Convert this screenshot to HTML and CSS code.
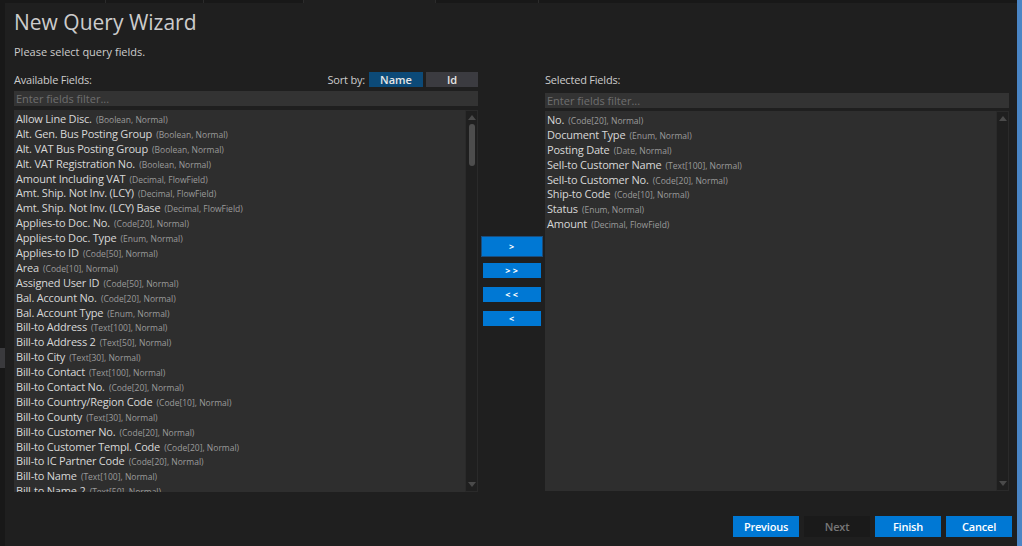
FILE: index.html
```html
<!DOCTYPE html>
<html lang="en">
<head>
    <meta charset="UTF-8">
    <title>New Query Wizard</title>
    <link rel="stylesheet" href="styles.css">
</head>
<body>
    <div class="frame">
        <div class="side-strip"><div class="side-mark"></div></div>

        <div class="wizard">
            <div class="tab-strip">
                <div class="tab" style="width:100px"></div>
                <div class="tab" style="width:97px"></div>
                <div class="tab" style="width:99px"></div>
                <div class="tab active" style="width:131px"></div>
                <div class="tab" style="width:102px"></div>
                <div class="tab tab-rest"></div>
            </div>

            <h1>New Query Wizard</h1>
            <p class="subtitle">Please select query fields.</p>

            <div class="panes">
                <div class="pane">
                    <div class="pane-header">
                        <span>Available Fields:</span>
                        <div class="sort">
                            <span class="sort-label">Sort by:</span>
                            <button class="sort-button active">Name</button>
                            <button class="sort-button">Id</button>
                        </div>
                    </div>
                    <input class="filter" type="text" placeholder="Enter fields filter...">
                    <div class="list">
                        <div class="items" id="availableList"></div>
                        <div class="scrollbar">
                            <span class="arrow up"></span>
                            <span class="thumb"></span>
                            <span class="arrow down"></span>
                        </div>
                    </div>
                </div>

                <div class="movers">
                    <button class="move-button focused">&gt;</button>
                    <button class="move-button">&gt; &gt;</button>
                    <button class="move-button">&lt; &lt;</button>
                    <button class="move-button">&lt;</button>
                </div>

                <div class="pane pane-right">
                    <div class="pane-header">
                        <span>Selected Fields:</span>
                    </div>
                    <input class="filter" type="text" placeholder="Enter fields filter...">
                    <div class="list">
                        <div class="items" id="selectedList"></div>
                        <div class="scrollbar">
                            <span class="arrow up"></span>
                            <span class="thumb hidden"></span>
                            <span class="arrow down"></span>
                        </div>
                    </div>
                </div>
            </div>

            <div class="footer">
                <button class="nav-button">Previous</button>
                <button class="nav-button disabled">Next</button>
                <button class="nav-button">Finish</button>
                <button class="nav-button">Cancel</button>
            </div>
        </div>

        <div class="edge-strip"></div>
    </div>

    <script>
        // Field lists: [name, type]
        const available = [
            ['Allow Line Disc.', 'Boolean, Normal'],
            ['Alt. Gen. Bus Posting Group', 'Boolean, Normal'],
            ['Alt. VAT Bus Posting Group', 'Boolean, Normal'],
            ['Alt. VAT Registration No.', 'Boolean, Normal'],
            ['Amount Including VAT', 'Decimal, FlowField'],
            ['Amt. Ship. Not Inv. (LCY)', 'Decimal, FlowField'],
            ['Amt. Ship. Not Inv. (LCY) Base', 'Decimal, FlowField'],
            ['Applies-to Doc. No.', 'Code[20], Normal'],
            ['Applies-to Doc. Type', 'Enum, Normal'],
            ['Applies-to ID', 'Code[50], Normal'],
            ['Area', 'Code[10], Normal'],
            ['Assigned User ID', 'Code[50], Normal'],
            ['Bal. Account No.', 'Code[20], Normal'],
            ['Bal. Account Type', 'Enum, Normal'],
            ['Bill-to Address', 'Text[100], Normal'],
            ['Bill-to Address 2', 'Text[50], Normal'],
            ['Bill-to City', 'Text[30], Normal'],
            ['Bill-to Contact', 'Text[100], Normal'],
            ['Bill-to Contact No.', 'Code[20], Normal'],
            ['Bill-to Country/Region Code', 'Code[10], Normal'],
            ['Bill-to County', 'Text[30], Normal'],
            ['Bill-to Customer No.', 'Code[20], Normal'],
            ['Bill-to Customer Templ. Code', 'Code[20], Normal'],
            ['Bill-to IC Partner Code', 'Code[20], Normal'],
            ['Bill-to Name', 'Text[100], Normal'],
            ['Bill-to Name 2', 'Text[50], Normal']
        ];
        const selected = [
            ['No.', 'Code[20], Normal'],
            ['Document Type', 'Enum, Normal'],
            ['Posting Date', 'Date, Normal'],
            ['Sell-to Customer Name', 'Text[100], Normal'],
            ['Sell-to Customer No.', 'Code[20], Normal'],
            ['Ship-to Code', 'Code[10], Normal'],
            ['Status', 'Enum, Normal'],
            ['Amount', 'Decimal, FlowField']
        ];

        function fillList(id, fields) {
            const list = document.getElementById(id);
            fields.forEach(([name, type]) => {
                const row = document.createElement('div');
                row.className = 'item';
                row.innerHTML = `<span class="item-name">${name}</span> <span class="item-type">(${type})</span>`;
                list.appendChild(row);
            });
        }

        fillList('availableList', available);
        fillList('selectedList', selected);
    </script>
</body>
</html>
```

FILE: styles.css
```css
body {
    margin: 0;
    background-color: #1f1f1f;
    font-family: 'Open Sans', 'Noto Sans', sans-serif;
    color: #cccccc;
    overflow: hidden;
}
.frame {
    display: flex;
    height: 546px;
}
.side-strip {
    width: 5px;
    background-color: #181818;
    padding-top: 348px;
}
.side-mark {
    height: 20px;
    background-color: #3a3a3d;
}
.edge-strip {
    width: 5px;
    background-color: #4a85c5;
}
.wizard {
    flex: 1;
    padding: 0 0 0 9px;
}
.tab-strip {
    display: flex;
    height: 3px;
    margin-left: -9px;
}
.tab {
    background-color: #181818;
    border-right: 1px solid #2b2b2b;
}
.tab.active {
    background-color: #1f1f1f;
}
.tab-rest {
    flex: 1;
    border-right: none;
}
h1 {
    margin: 5px 0 0;
    font-size: 21px;
    font-weight: normal;
    line-height: 28px;
    color: #cccccc;
}
.subtitle {
    margin: 8px 0 0;
    font-size: 11px;
    line-height: 16px;
}
.panes {
    display: flex;
    gap: 4px;
    margin-top: 12px;
}
.pane {
    width: 464px;
    display: flex;
    flex-direction: column;
}
.pane-header {
    display: flex;
    justify-content: space-between;
    align-items: center;
    height: 15px;
    font-size: 11px;
    letter-spacing: -0.2px;
}
.pane-right .pane-header {
    height: 18px;
    align-items: flex-start;
    line-height: 15px;
}
.sort {
    display: flex;
    align-items: center;
    gap: 3px;
}
.sort-label {
    margin-right: 1px;
}
.sort-button {
    width: 54px;
    height: 15px;
    padding: 0;
    border: none;
    background-color: #3b3b40;
    color: #e6e6e6;
    font-family: inherit;
    font-size: 11px;
    font-weight: 600;
    line-height: 15px;
}
.sort-button + .sort-button {
    width: 52px;
}
.sort-button.active {
    background-color: #0c4a78;
}
.filter {
    margin-top: 4px;
    height: 15px;
    padding: 0 2px;
    border: none;
    background-color: #333333;
    color: #cccccc;
    font-family: inherit;
    font-size: 11px;
}
.filter::placeholder {
    color: #6f6f6f;
}
.list {
    display: flex;
    margin-top: 4px;
    height: 382px;
    background-color: #2e2e2e;
    overflow: hidden;
}
.pane-right .filter {
    margin-top: 3px;
}
.pane-right .list {
    margin-top: 3px;
    height: 380px;
}
.items {
    flex: 1;
    padding: 0 2px;
    overflow: hidden;
}
.item {
    height: 14.9px;
    line-height: 15px;
    white-space: nowrap;
}
.item-name {
    font-size: 11px;
    font-weight: 500;
    letter-spacing: -0.2px;
    color: #d8d8d8;
}
.item-type {
    font-size: 8.5px;
    color: #9b9b9b;
}
.scrollbar {
    width: 11px;
    display: flex;
    flex-direction: column;
    align-items: center;
    background-color: #1f1f1f;
    border: 1px solid #2a2a2a;
}
.arrow {
    width: 0;
    height: 0;
    border-left: 4px solid transparent;
    border-right: 4px solid transparent;
}
.arrow.up {
    margin-top: 4px;
    border-bottom: 5px solid #4a4a4a;
}
.arrow.down {
    margin-top: auto;
    margin-bottom: 4px;
    border-top: 5px solid #4a4a4a;
}
.thumb {
    margin-top: 4px;
    width: 6px;
    height: 42px;
    border-radius: 3px;
    background-color: #4d4d4d;
}
.thumb.hidden {
    visibility: hidden;
}
.movers {
    display: flex;
    flex-direction: column;
    align-items: center;
    gap: 9px;
    width: 59px;
    padding-top: 166px;
}
.move-button {
    width: 58px;
    height: 15px;
    padding: 0;
    border: none;
    background-color: #0078d4;
    color: #ffffff;
    font-family: inherit;
    font-size: 9px;
    font-weight: bold;
    line-height: 15px;
}
.move-button.focused {
    height: 17px;
    box-shadow: 0 0 0 1px #0078d4, 0 0 0 2px #1b4d7c;
    margin-bottom: -1px;
}
.footer {
    display: flex;
    justify-content: flex-end;
    gap: 5px;
    margin-top: 24px;
    padding-right: 5px;
}
.nav-button {
    width: 66px;
    height: 21px;
    padding: 0;
    border: none;
    background-color: #0078d4;
    color: #ffffff;
    font-family: inherit;
    font-size: 11px;
    font-weight: 600;
    letter-spacing: -0.2px;
}
.nav-button.disabled {
    background-color: #1a1a1a;
    color: #767676;
}
```
